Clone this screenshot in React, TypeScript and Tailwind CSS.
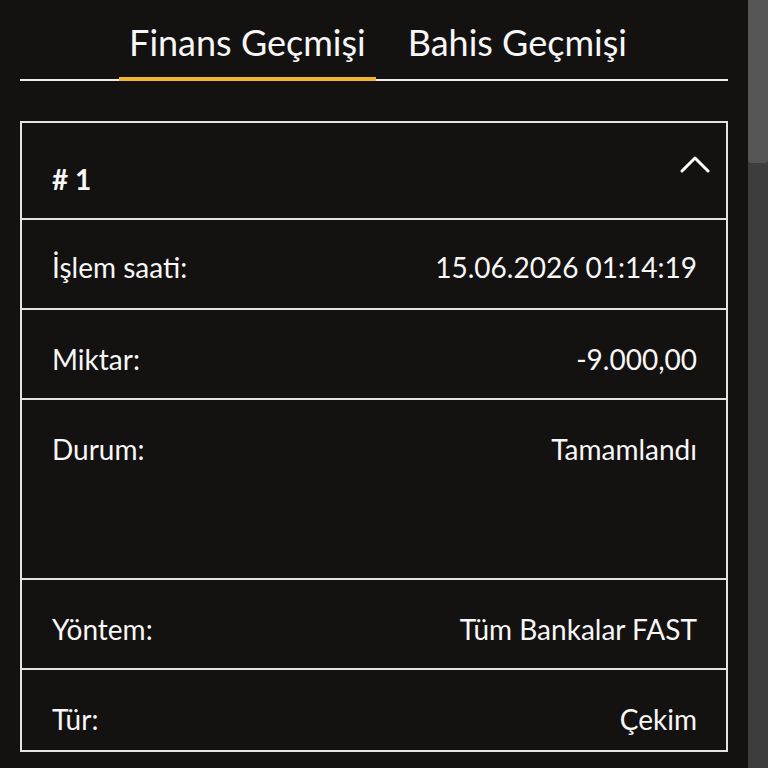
import React from "react";

const rows: { label: string; value: string; h: string }[] = [
  { label: "İşlem saati:", value: "15.06.2026 01:14:19", h: "h-[90px]" },
  { label: "Miktar:", value: "-9.000,00", h: "h-[90px]" },
  { label: "Durum:", value: "Tamamlandı", h: "h-[180px]" },
  { label: "Yöntem:", value: "Tüm Bankalar FAST", h: "h-[90px]" },
  { label: "Tür:", value: "Çekim", h: "h-[82px]" },
];

export default function App() {
  return (
    <div
      className="flex h-[768px] w-[768px] overflow-hidden bg-[#141111] text-[#f7f7f7]"
      style={{ fontFamily: "Lato, 'Open Sans', sans-serif" }}
    >
      <div className="flex w-[748px] flex-col px-[20px]">
        <div className="flex justify-center gap-[22px] border-b-2 border-[#eeeeee] pl-[8px] pt-[21px]">
          <div className="-mb-[2px] border-b-4 border-[#f2b52c] px-[10px] pb-[13px] text-[36px] leading-[43px]">
            Finans Geçmişi
          </div>
          <div className="-mb-[2px] border-b-4 border-transparent px-[10px] pb-[13px] text-[36px] leading-[43px]">
            Bahis Geçmişi
          </div>
        </div>
        <div className="mt-[40px] flex flex-col border-2 border-[#e2e2e2]">
          <div className="flex h-[95px] justify-between pl-[30px] pr-[16px] pt-[39px]">
            <span className="text-[28px] font-bold leading-[34px]">#&nbsp;1</span>
            <svg
              className="-mt-[7px]"
              width="30"
              height="20"
              viewBox="0 0 30 20"
              fill="none"
              stroke="#ffffff"
              strokeWidth="3"
              strokeLinecap="round"
              strokeLinejoin="round"
            >
              <path d="M2 16 L15 3 L28 16" />
            </svg>
          </div>
          {rows.map((r, i) => (
            <div
              key={r.label}
              className={`flex justify-between border-t-2 border-[#e2e2e2] pl-[30px] pr-[29px] text-[28px] leading-[34px] ${i === 0 ? "pt-[30px]" : "pt-[32px]"} ${r.h}`}
            >
              <span>{r.label}</span>
              <span>{r.value}</span>
            </div>
          ))}
        </div>
      </div>
      <div className="flex w-[20px] flex-col bg-[#3d3d3d]">
        <div className="h-[163px] rounded-b-[3px] bg-[#555555]" />
      </div>
    </div>
  );
}
